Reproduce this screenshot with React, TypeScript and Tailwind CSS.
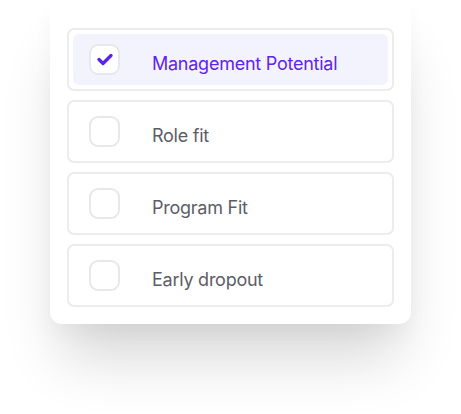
import React from "react";

const items = [
  { label: "Management Potential", checked: true },
  { label: "Role fit", checked: false },
  { label: "Program Fit", checked: false },
  { label: "Early dropout", checked: false },
];

export default function App() {
  return (
    <div
      className="w-[461px] h-[414px] bg-white pl-[50px]"
      style={{ fontFamily: "Inter, 'Noto Sans', sans-serif" }}
    >
      <div className="w-[361px] rounded-b-[12px] bg-white px-[17px] pt-[28px] pb-[17px] flex flex-col gap-[9px] shadow-[0_45px_55px_-12px_rgba(0,0,0,0.16),0_10px_20px_rgba(0,0,0,0.03)]">
        {items.map((it) => (
          <div
            key={it.label}
            className="h-[63px] rounded-[7px] border-2 border-[#ececec] p-[4px]"
          >
            <div
              className={`h-full rounded-[6px] flex items-center pl-[16px] ${
                it.checked ? "bg-[#f3f3fe]" : "bg-white"
              }`}
            >
              <div className="w-[31px] h-[31px] rounded-[9px] border-2 border-[#e8e8ea] bg-white flex items-center justify-center">
                {it.checked && (
                  <svg width="16" height="13" viewBox="0 0 16 13" fill="none">
                    <path
                      d="M2 6.5 L6 10.5 L14 2.5"
                      stroke="#5b22ee"
                      strokeWidth="3.2"
                      strokeLinecap="round"
                      strokeLinejoin="round"
                    />
                  </svg>
                )}
              </div>
              <span
                className={`ml-[32px] pt-[9px] text-[18px] leading-[24px] tracking-[-0.25px] ${
                  it.checked ? "text-[#5f23f0]" : "text-[#5d5d66]"
                }`}
              >
                {it.label}
              </span>
            </div>
          </div>
        ))}
      </div>
    </div>
  );
}
